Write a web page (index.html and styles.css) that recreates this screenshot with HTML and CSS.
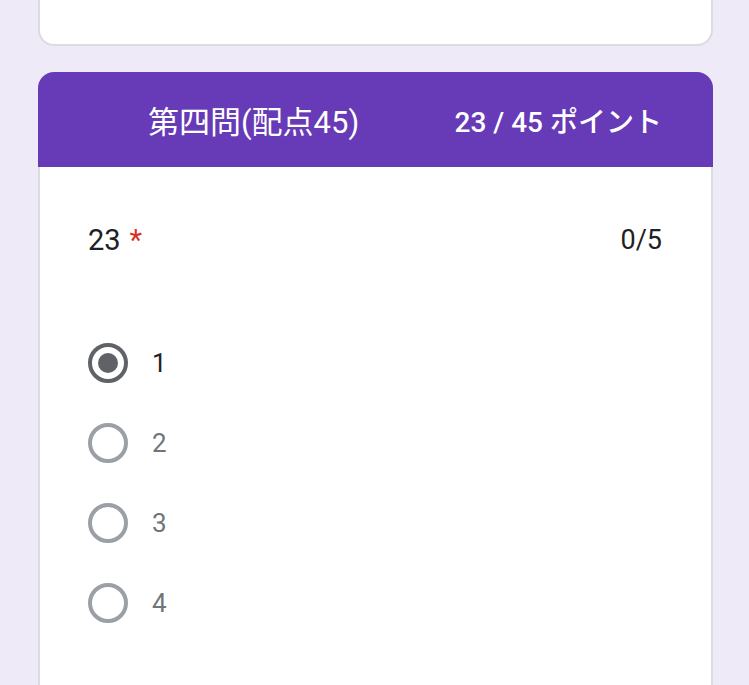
FILE: index.html
```html
<!DOCTYPE html>
<html lang="ja">
<head>
<meta charset="utf-8">
<title>第四問</title>
<link rel="stylesheet" href="styles.css">
</head>
<body>
<div class="page">
  <div class="prev-card"></div>
  <section class="card">
    <header class="card-head">
      <div class="title">第四問(配点45)</div>
      <div class="points">23 / 45 ポイント</div>
    </header>
    <div class="card-body">
      <div class="question">
        <div class="q-title">23<span class="req">*</span></div>
        <div class="q-score">0/5</div>
      </div>
      <div class="options">
        <div class="option selected"><span class="radio"></span><span class="label">1</span></div>
        <div class="option"><span class="radio"></span><span class="label">2</span></div>
        <div class="option"><span class="radio"></span><span class="label">3</span></div>
        <div class="option"><span class="radio"></span><span class="label">4</span></div>
      </div>
    </div>
  </section>
</div>
</body>
</html>
```
FILE: styles.css
```css
html, body {
  margin: 0;
  padding: 0;
  background: #eeeaf7;
  font-family: Roboto, "Noto Sans CJK JP", sans-serif;
  height: 100%;
  overflow: hidden;
}
.page {
  padding: 0 36px 0 38px;
}
.prev-card {
  height: 44px;
  background: #fff;
  border: 2px solid #dadce0;
  border-top: none;
  border-radius: 0 0 16px 16px;
}
.card {
  margin-top: 26px;
}
.card-head {
  height: 95px;
  background: #673ab7;
  border-radius: 16px 16px 0 0;
  color: #fff;
  display: flex;
  align-items: center;
  padding: 0 51px 0 110px;
}
.title {
  font-size: 31px;
  flex: 1;
}
.points {
  font-size: 28px;
  font-weight: 500;
}
.card-body {
  background: #fff;
  border-left: 2px solid #dadce0;
  border-right: 2px solid #dadce0;
  padding: 0 49px 100px 48px;
}
.question {
  display: flex;
  justify-content: space-between;
  padding-top: 56px;
  height: 90px;
  box-sizing: border-box;
  color: #202124;
}
.q-title {
  font-size: 29px;
  line-height: 34px;
}
.req {
  color: #d93025;
  margin-left: 9px;
}
.q-score {
  font-size: 27px;
  line-height: 34px;
}
.options {
  margin-top: 66px;
  display: flex;
  flex-direction: column;
}
.option {
  display: flex;
  align-items: center;
  height: 80px;
}
.radio {
  width: 40px;
  height: 40px;
  box-sizing: border-box;
  border: 4px solid #9aa0a6;
  border-radius: 50%;
  display: flex;
  align-items: center;
  justify-content: center;
}
.selected .radio {
  border-color: #5f6368;
}
.selected .radio::after {
  content: "";
  width: 20px;
  height: 20px;
  border-radius: 50%;
  background: #5f6368;
}
.label {
  margin-left: 24px;
  font-size: 26px;
  color: #70757a;
}
.selected .label {
  color: #202124;
}
```
